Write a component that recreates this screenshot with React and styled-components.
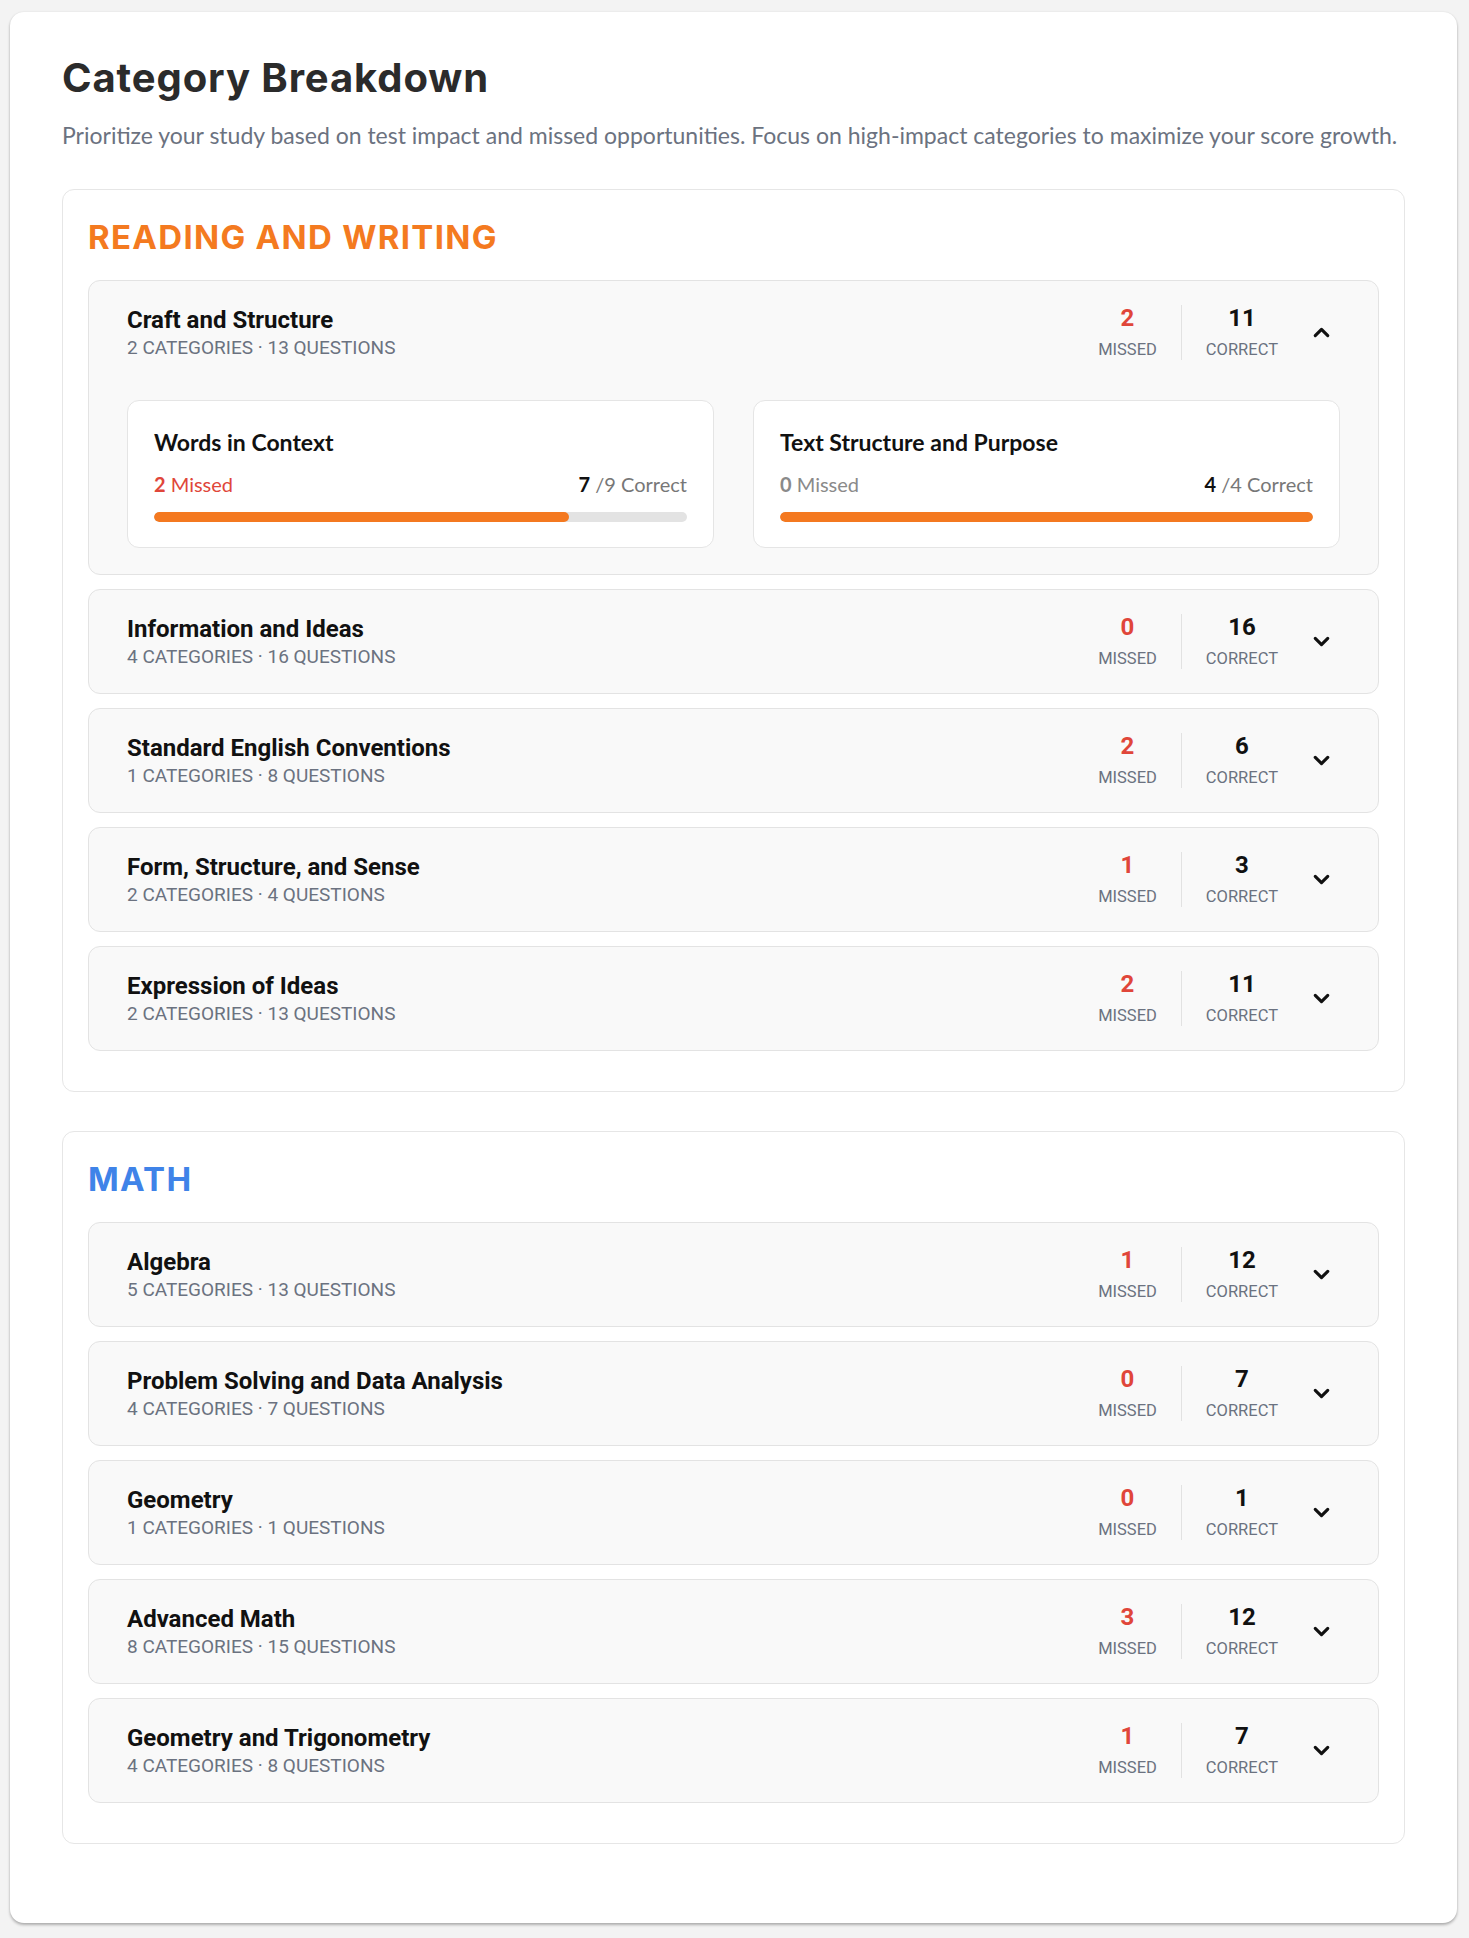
import React, { useState } from "react";
import styled, { createGlobalStyle } from "styled-components";
import { ChevronDown, ChevronUp } from "lucide-react";

const GlobalStyle = createGlobalStyle`
    body {
        margin: 0;
        background: #f3f3f3;
        font-family: "Lato", "Liberation Sans", sans-serif;
    }
`

const sections = [
    {
        name: "READING AND WRITING",
        color: "#f47a20",
        domains: [
            {
                name: "Craft and Structure", cats: 2, questions: 13, missed: 2, correct: 11,
                skills: [
                    { name: "Words in Context", missed: 2, correct: 7, total: 9 },
                    { name: "Text Structure and Purpose", missed: 0, correct: 4, total: 4 },
                ],
            },
            { name: "Information and Ideas", cats: 4, questions: 16, missed: 0, correct: 16 },
            { name: "Standard English Conventions", cats: 1, questions: 8, missed: 2, correct: 6 },
            { name: "Form, Structure, and Sense", cats: 2, questions: 4, missed: 1, correct: 3 },
            { name: "Expression of Ideas", cats: 2, questions: 13, missed: 2, correct: 11 },
        ],
    },
    {
        name: "MATH",
        color: "#3f83e8",
        domains: [
            { name: "Algebra", cats: 5, questions: 13, missed: 1, correct: 12 },
            { name: "Problem Solving and Data Analysis", cats: 4, questions: 7, missed: 0, correct: 7 },
            { name: "Geometry", cats: 1, questions: 1, missed: 0, correct: 1 },
            { name: "Advanced Math", cats: 8, questions: 15, missed: 3, correct: 12 },
            { name: "Geometry and Trigonometry", cats: 4, questions: 8, missed: 1, correct: 7 },
        ],
    },
]

function SkillCard({ skill }) {
    const pct = skill.total ? (skill.correct / skill.total) * 100 : 0
    return (
        <Skill>
            <SkillName>{skill.name}</SkillName>
            <SkillStats>
                <SkillMissed active={skill.missed > 0}><b>{skill.missed}</b> Missed</SkillMissed>
                <SkillCorrect><b>{skill.correct}</b> /{skill.total} Correct</SkillCorrect>
            </SkillStats>
            <Track>
                <Fill style={{ width: `${pct}%` }} />
            </Track>
        </Skill>
    )
}

function DomainRow({ domain }) {
    const [open, setOpen] = useState(!!domain.skills)
    return (
        <Row>
            <RowHeader>
                <RowInfo>
                    <RowTitle>{domain.name}</RowTitle>
                    <RowMeta>{domain.cats} CATEGORIES · {domain.questions} QUESTIONS</RowMeta>
                </RowInfo>
                <Stat>
                    <StatNum missed>{domain.missed}</StatNum>
                    <StatLabel>MISSED</StatLabel>
                </Stat>
                <Divider />
                <Stat>
                    <StatNum>{domain.correct}</StatNum>
                    <StatLabel>CORRECT</StatLabel>
                </Stat>
                <Toggle onClick={() => setOpen(!open)}>
                    {open ? <ChevronUp size={25} strokeWidth={3} /> : <ChevronDown size={25} strokeWidth={3} />}
                </Toggle>
            </RowHeader>
            {open && domain.skills && (
                <SkillGrid>
                    {domain.skills.map((s) => <SkillCard key={s.name} skill={s} />)}
                </SkillGrid>
            )}
        </Row>
    )
}

export default function App() {
    return (
        <>
            <GlobalStyle />
            <Page>
                <Card>
                    <Title>Category Breakdown</Title>
                    <Subtitle>Prioritize your study based on test impact and missed opportunities. Focus on high-impact categories to maximize your score growth.</Subtitle>
                    <Sections>
                        {sections.map((sec) => (
                            <Section key={sec.name}>
                                <SectionTitle color={sec.color}>{sec.name}</SectionTitle>
                                <RowList>
                                    {sec.domains.map((d) => <DomainRow key={d.name} domain={d} />)}
                                </RowList>
                            </Section>
                        ))}
                    </Sections>
                </Card>
            </Page>
        </>
    )
}

const Page = styled.div`
    padding: 12px 12px 17px 10px;
`
const Card = styled.div`
    background: #fff;
    border-radius: 14px;
    box-shadow: 0 2px 3px rgba(0, 0, 0, 0.28), 0 0 2px rgba(0, 0, 0, 0.08);
    padding: 42px 52px 79px;
`
const Title = styled.h1`
    margin: 0;
    font-family: "Inter", sans-serif;
    font-weight: 700;
    font-size: 40px;
    line-height: 48px;
    color: #2b2b2b;
    letter-spacing: 0.9px;
`
const Subtitle = styled.p`
    margin: 18px 0 0;
    font-size: 23px;
    line-height: 30px;
    color: #6b7280;
`
const Sections = styled.div`
    display: flex;
    flex-direction: column;
    gap: 39px;
    margin-top: 39px;
`
const Section = styled.section`
    border: 1px solid #e6e6e6;
    border-radius: 12px;
    padding: 28px 25px 40px;
`
const SectionTitle = styled.h2`
    margin: 0;
    font-family: "Inter", sans-serif;
    font-weight: 700;
    font-size: 33px;
    line-height: 38px;
    letter-spacing: 1.3px;
    color: ${props => props.color};
`
const RowList = styled.div`
    display: flex;
    flex-direction: column;
    gap: 14px;
    margin-top: 24px;
`
const Row = styled.div`
    background: #f9f9f9;
    border: 1px solid #e3e3e3;
    border-radius: 12px;
    padding: 25px 38px 26px;
`
const RowHeader = styled.div`
    display: flex;
    align-items: center;
    height: 52px;
`
const RowInfo = styled.div`
    flex: 1;
    font-family: "Roboto", sans-serif;
`
const RowTitle = styled.div`
    font-size: 24px;
    line-height: 28px;
    font-weight: 700;
    color: #111;
`
const RowMeta = styled.div`
    margin-top: 3px;
    font-size: 19px;
    line-height: 22px;
    color: #6b7280;
`
const Stat = styled.div`
    display: flex;
    flex-direction: column;
    align-items: center;
    padding: 0 24px;
    font-family: "Roboto", sans-serif;
`
const StatNum = styled.div`
    font-size: 24px;
    line-height: 28px;
    font-weight: 700;
    color: ${props => props.missed ? '#e0463a' : '#111'};
`
const StatLabel = styled.div`
    margin-top: 8px;
    font-size: 16.5px;
    line-height: 20px;
    color: #6b7280;
`
const Divider = styled.div`
    width: 1px;
    height: 55px;
    background: #e2e2e2;
`
const Toggle = styled.button`
    width: 38px;
    height: 40px;
    display: flex;
    align-items: center;
    justify-content: center;
    padding: 0;
    border: none;
    background: none;
    color: #111;
    cursor: pointer;
`
const SkillGrid = styled.div`
    display: grid;
    grid-template-columns: 1fr 1fr;
    gap: 39px;
    margin-top: 42px;
`
const Skill = styled.div`
    background: #fff;
    border: 1px solid #e5e5e5;
    border-radius: 12px;
    padding: 27px 26px 25px;
`
const SkillName = styled.div`
    font-size: 23px;
    line-height: 28px;
    font-weight: 700;
    color: #111;
`
const SkillStats = styled.div`
    display: flex;
    justify-content: space-between;
    margin-top: 15px;
    font-size: 20px;
    line-height: 26px;
`
const SkillMissed = styled.span`
    color: ${props => props.active ? '#e0463a' : '#8a8a8a'};
`
const SkillCorrect = styled.span`
    color: #777;
    b {
        color: #111;
    }
`
const Track = styled.div`
    height: 10px;
    margin-top: 15px;
    border-radius: 5px;
    background: #e3e3e3;
    overflow: hidden;
`
const Fill = styled.div`
    height: 100%;
    border-radius: 5px;
    background: #f47920;
`
